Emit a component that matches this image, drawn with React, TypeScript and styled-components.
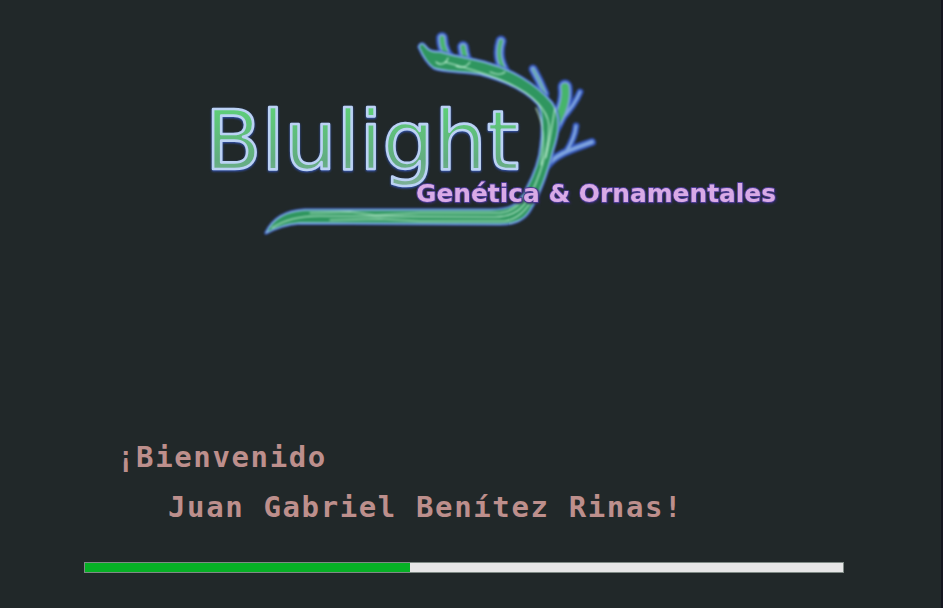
import React from "react";
import styled, { createGlobalStyle } from "styled-components";

const trunk =
  "M266 233 C272 220 285 211 305 210 L490 210 C510 210 518 206 526 190 C534 175 540 160 541 145 C543 130 543 112 538 104 C528 92 510 82 480 74 C460 71 445 72 434 68 C428 64 423 56 419 47 C420 43 423 43 425 46 C429 52 434 52 440 52 C460 58 475 59 487 63 C510 69 535 83 552 103 C562 118 558 135 553 150 C548 170 542 190 530 210 C524 220 515 224 500 224 L300 223 C285 224 275 228 266 233 Z";

const veins = [
  "M272 228 C285 219 300 216 320 216 L495 217 C515 217 524 208 532 192 C541 172 549 150 549 125 C547 108 530 94 510 84 C490 74 465 68 445 62",
  "M310 213 L350 212 L375 215 L420 213 L500 213 C512 212 520 205 526 195",
  "M330 220 L380 219 L420 221 L505 221 C518 219 527 210 534 196",
  "M536 108 C544 125 545 140 541 165",
  "M555 108 C552 125 550 140 546 158",
  "M448 58 C446 64 440 66 436 62 M470 62 C466 68 460 68 456 66 M505 72 C500 76 495 74 490 72",
];

const twigs = [
  { d: "M442 38 C442 48 447 58 456 64", w: 12 },
  { d: "M463 47 C464 54 465 60 471 68", w: 12 },
  { d: "M501 41 C497 54 499 64 510 80", w: 11 },
  { d: "M533 69 C537 76 541 84 545 94", w: 9 },
  { d: "M565 87 C567 100 562 114 552 130", w: 15 },
  { d: "M580 92 C576 102 570 110 561 120", w: 7 },
  { d: "M547 166 C556 154 570 150 592 142", w: 8 },
  { d: "M576 126 C575 136 571 144 566 152", w: 7 },
];

const Logo: React.FC = () => (
  <LogoArt viewBox="0 0 590 210" role="img" aria-label="Blulight Genética & Ornamentales">
    <defs>
      <linearGradient id="brandFill" x1="0" y1="0" x2="0" y2="1">
        <stop offset="0" stopColor="#5cd876" />
        <stop offset="0.7" stopColor="#62ad80" />
        <stop offset="1" stopColor="#7fb09a" />
      </linearGradient>
    </defs>
    <g transform="translate(-200 -28)" strokeLinecap="round" strokeLinejoin="round">
      <SoftGroup>
        {twigs.map((t) => (
          <path key={`o${t.d}`} d={t.d} fill="none" stroke="#3355bb" strokeWidth={t.w} />
        ))}
        {twigs.map((t) => (
          <path key={`m${t.d}`} d={t.d} fill="none" stroke="#7ea4de" strokeWidth={t.w - 4} />
        ))}
        {twigs.slice(0, 5).map((t) => (
          <path key={`g${t.d}`} d={t.d} fill="none" stroke="#46b56a" strokeWidth={t.w - 8} />
        ))}
        <path d={trunk} fill="#3355bb" stroke="#3355bb" strokeWidth={3.5} />
        <path d={trunk} fill="#2f965f" stroke="#8fbcec" strokeWidth={1.4} />
        {veins.map((d) => (
          <path key={d} d={d} fill="none" stroke="#c4f2d6" strokeWidth={1.1} />
        ))}
      </SoftGroup>
      <BrandText x={205} y={169} textLength={314} lengthAdjust="spacingAndGlyphs">
        Blulight
      </BrandText>
      <TagText x={416} y={202} textLength={360} lengthAdjust="spacingAndGlyphs">
        Genética &amp; Ornamentales
      </TagText>
    </g>
  </LogoArt>
);

const App: React.FC = () => (
  <>
    <GlobalStyle />
    <Splash>
      <LogoSlot>
        <Logo />
      </LogoSlot>
      <Welcome>
        <Greeting>¡Bienvenido</Greeting>
        <UserName>Juan Gabriel Benítez Rinas!</UserName>
      </Welcome>
      <ProgressTrack>
        <ProgressFill $value={42.9} />
      </ProgressTrack>
    </Splash>
  </>
);

const GlobalStyle = createGlobalStyle`
  html, body {
    margin: 0;
    height: 100%;
    background: #212829;
  }
`;

const Splash = styled.main`
  position: relative;
  display: flex;
  flex-direction: column;
  box-sizing: border-box;
  width: 943px;
  height: 608px;
  padding-top: 28px;
  background: #212829;
  border-right: 2px solid #14151f;
  overflow: hidden;

  /* the capture's window corner */
  &::after {
    content: "";
    position: absolute;
    right: -2px;
    bottom: 0;
    width: 2px;
    height: 3px;
    background: #f0f0f0;
  }
`;

const LogoSlot = styled.div`
  padding-left: 200px;
  height: 210px;
`;

const LogoArt = styled.svg`
  display: block;
  width: 590px;
  height: 210px;
`;

const SoftGroup = styled.g`
  filter: blur(0.9px);
`;

const BrandText = styled.text`
  font-family: "DejaVu Sans", sans-serif;
  font-size: 82px;
  fill: url(#brandFill);
  stroke: #bcd2f4;
  stroke-width: 2.6px;
  filter: drop-shadow(0 1px 1px #3355bb) blur(0.6px);
`;

const TagText = styled.text`
  font-family: "DejaVu Sans", sans-serif;
  font-size: 24px;
  font-weight: 700;
  fill: #d9aae6;
  stroke: #4c3c94;
  stroke-width: 1.8px;
  paint-order: stroke;
  filter: drop-shadow(1px 1px 1px #2e2a58) blur(0.7px);
`;

const Welcome = styled.section`
  display: flex;
  flex-direction: column;
  gap: 17px;
  margin-top: 203px;
  padding-left: 117px;
  font-family: "DejaVu Sans Mono", monospace;
  font-size: 29px;
  font-weight: 700;
  line-height: 33px;
  letter-spacing: 1.62px;
  color: #bd8f8c;
`;

const Greeting = styled.div``;

const UserName = styled.div`
  padding-left: 51px;
`;

const ProgressTrack = styled.div`
  box-sizing: border-box;
  width: 760px;
  height: 11px;
  margin: 38px 0 0 84px;
  border: 1px solid #7f8a85;
  background: #e6e6e6;
`;

const ProgressFill = styled.div<{ $value: number }>`
  width: ${({ $value }) => $value}%;
  height: 100%;
  background: #06b025;
`;

export default App;
